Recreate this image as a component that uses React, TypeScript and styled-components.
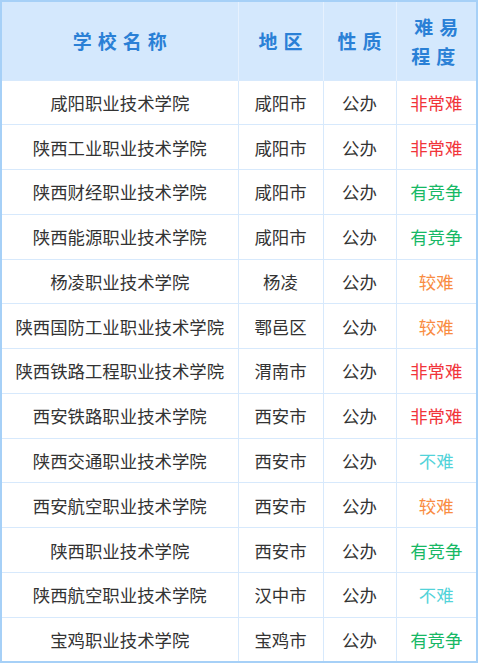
import React from "react";
import styled, { createGlobalStyle } from "styled-components";

const GlobalStyle = createGlobalStyle`
  html, body {
    margin: 0;
    padding: 0;
    background: #ffffff;
  }
  body {
    font-family: "Noto Sans CJK SC", "Noto Sans", sans-serif;
  }
`;

const Table = styled.table`
  width: 478px;
  height: 663px;
  border-collapse: collapse;
  table-layout: fixed;
  border: 2px solid #a6d0f7;
  box-sizing: border-box;`;

const HeadRow = styled.tr`
  height: 79px;
  background-color: #d4e8fd;`;

const HeadCell = styled.th`
  color: #2a80d6;
  font-size: 19px;
  font-weight: bold;
  letter-spacing: 6px;
  text-indent: 6px;
  line-height: 29px;
  padding: 0;
  border-left: 1.5px solid #e6f1fe;
  border-right: 1.5px solid #e6f1fe;
  &:first-child { border-left: none; }
  &:last-child { border-right: none; }`;

const Row = styled.tr`
  height: 44.5px;`;

const Cell = styled.td<{ $color?: string }>`
  text-align: center;
  font-size: 17.4px;
  color: ${(p) => p.$color || "#333333"};
  padding: 0;
  border: 1.5px solid #d7e9fc;
  white-space: nowrap;`;

const difficultyColor: Record<string, string> = {
  非常难: "#f1343a",
  有竞争: "#16b865",
  较难: "#f98c42",
  不难: "#52d3d9",
};

const schools = [
  ["咸阳职业技术学院", "咸阳市", "公办", "非常难"],
  ["陕西工业职业技术学院", "咸阳市", "公办", "非常难"],
  ["陕西财经职业技术学院", "咸阳市", "公办", "有竞争"],
  ["陕西能源职业技术学院", "咸阳市", "公办", "有竞争"],
  ["杨凌职业技术学院", "杨凌", "公办", "较难"],
  ["陕西国防工业职业技术学院", "鄠邑区", "公办", "较难"],
  ["陕西铁路工程职业技术学院", "渭南市", "公办", "非常难"],
  ["西安铁路职业技术学院", "西安市", "公办", "非常难"],
  ["陕西交通职业技术学院", "西安市", "公办", "不难"],
  ["西安航空职业技术学院", "西安市", "公办", "较难"],
  ["陕西职业技术学院", "西安市", "公办", "有竞争"],
  ["陕西航空职业技术学院", "汉中市", "公办", "不难"],
  ["宝鸡职业技术学院", "宝鸡市", "公办", "有竞争"],
];

export default function App() {
  return (
    <>
      <GlobalStyle />
      <Table>
        <colgroup>
          <col style={{ width: 237 }} />
          <col style={{ width: 85 }} />
          <col style={{ width: 73 }} />
          <col />
        </colgroup>
        <thead>
          <HeadRow>
            <HeadCell>学校名称</HeadCell>
            <HeadCell>地区</HeadCell>
            <HeadCell>性质</HeadCell>
            <HeadCell>
              难易
              <br />
              程度
            </HeadCell>
          </HeadRow>
        </thead>
        <tbody>
          {schools.map(([name, area, kind, level]) => (
            <Row key={name}>
              <Cell>{name}</Cell>
              <Cell>{area}</Cell>
              <Cell>{kind}</Cell>
              <Cell $color={difficultyColor[level]}>{level}</Cell>
            </Row>
          ))}
        </tbody>
      </Table>
    </>
  );
}
